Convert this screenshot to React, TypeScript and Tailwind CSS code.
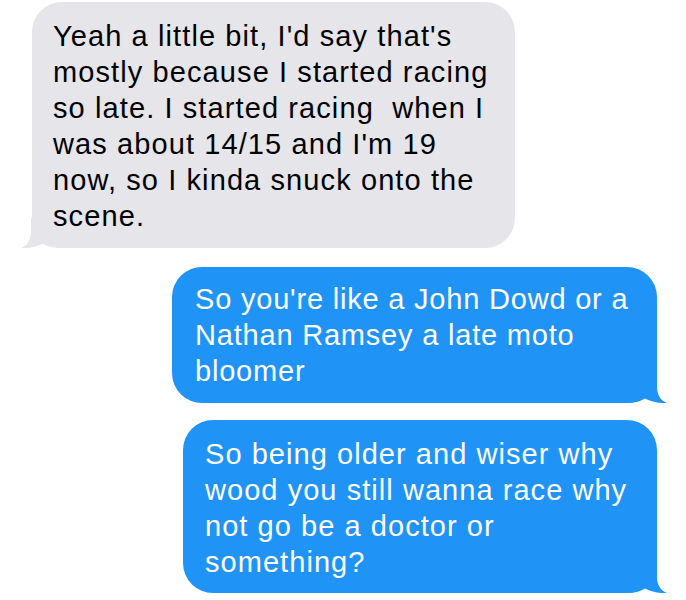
const font = { fontFamily: '"Liberation Sans", Arial, sans-serif' };

function Tail({ color, side }: { color: string; side: "left" | "right" }) {
  return (
    <svg
      width="40"
      height="30"
      viewBox="0 0 40 30"
      className={
        side === "right"
          ? "absolute bottom-0 right-[-10px]"
          : "absolute bottom-0 left-[-11px] -scale-x-100"
      }
    >
      <path
        d="M0,0 H30 V14 C30,22 34,28 40,30 C33,30.6 25,29 18,25.5 C13,28.5 7,30 0,30 Z"
        fill={color}
      />
    </svg>
  );
}

function Bubble({
  lines,
  me,
  className,
}: {
  lines: string[];
  me?: boolean;
  className: string;
}) {
  return (
    <div
      className={`relative rounded-[30px] text-[29px] leading-[36px] ${
        me ? "bg-[#2094f6] text-white" : "bg-[#e5e5ea] text-black"
      } ${className}`}
      style={font}
    >
      {lines.map((l, i) => (
        <div key={i} className="relative z-10 whitespace-pre">
          {l}
        </div>
      ))}
      <Tail color={me ? "#2094f6" : "#e5e5ea"} side={me ? "right" : "left"} />
    </div>
  );
}

export default function App() {
  return (
    <div className="w-[686px] h-[600px] bg-white flex flex-col overflow-hidden">
      <Bubble
        className="self-start ml-[32px] mt-[2px] w-[483px] pl-[21px] pt-[16px] pb-[14px] tracking-[1.1px]"
        lines={[
          "Yeah a little bit, I'd say that's",
          "mostly because I started racing",
          "so late. I started racing  when I",
          "was about 14/15 and I'm 19",
          "now, so I kinda snuck onto the",
          "scene.",
        ]}
      />
      <Bubble
        me
        className="self-end mr-[29px] mt-[19px] w-[485px] pl-[23px] pt-[14px] pb-[14px] tracking-[0.8px]"
        lines={[
          "So you're like a John Dowd or a",
          "Nathan Ramsey a late moto",
          "bloomer",
        ]}
      />
      <Bubble
        me
        className="self-end mr-[29px] mt-[17px] w-[474px] pl-[22px] pt-[16px] pb-[13px] tracking-[1.05px]"
        lines={[
          "So being older and wiser why",
          "wood you still wanna race why",
          "not go be a doctor or",
          "something?",
        ]}
      />
    </div>
  );
}
